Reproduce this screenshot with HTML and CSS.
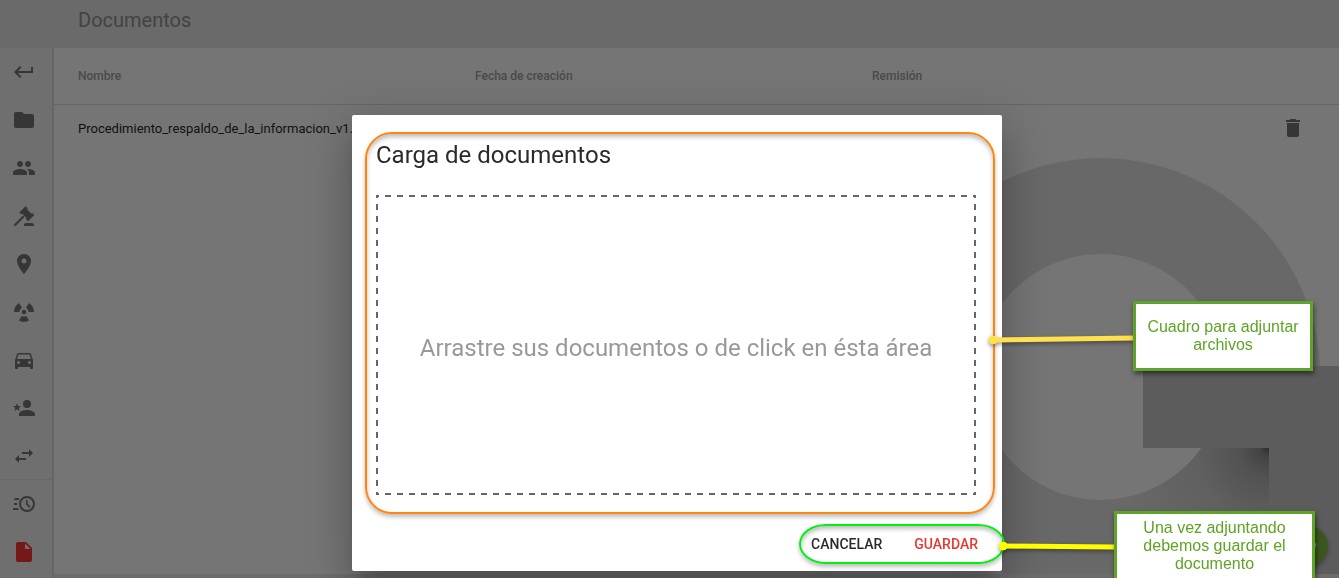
FILE: index.html
```html
<!DOCTYPE html>
<html lang="es">
<head>
<meta charset="utf-8">
<title>Documentos</title>
<link rel="stylesheet" href="styles.css">
</head>
<body>
<div class="app">
  <header class="topbar"><h1 class="topbar-title">Documentos</h1></header>
  <div class="body">
    <nav class="sidebar">
      <a class="nav-item" href="#" aria-label="Volver"><svg class="icon" viewBox="0 0 24 24"><path d="M19 7v4H5.830l3.580-3.590L8 6l-6 6 6 6 1.410-1.410L5.830 13H21V7z"/></svg></a>
      <a class="nav-item" href="#" aria-label="Carpetas"><svg class="icon" viewBox="0 0 24 24"><path d="M10 4H4c-1.100 0-2 .9-2 2v12c0 1.100.9 2 2 2h16c1.100 0 2-.9 2-2V8c0-1.100-.9-2-2-2h-8l-2-2z"/></svg></a>
      <a class="nav-item" href="#" aria-label="Personas"><svg class="icon" viewBox="0 0 24 24"><path d="M16 11c1.660 0 3-1.340 3-3s-1.340-3-3-3-3 1.340-3 3 1.340 3 3 3zm-8 0c1.660 0 3-1.340 3-3S9.660 5 8 5 5 6.340 5 8s1.340 3 3 3zm0 2c-2.330 0-7 1.170-7 3.500V19h14v-2.500C15 14.170 10.330 13 8 13zm8 0c-.29 0-.62.02-.97.05 1.160.84 1.970 1.970 1.970 3.450V19h6v-2.500c0-2.330-4.670-3.500-7-3.500z"/></svg></a>
      <a class="nav-item" href="#" aria-label="Audiencias"><svg class="icon" viewBox="0 0 24 24"><path d="M2.300 20.200l8.600-8.600 1.500 1.500-8.600 8.600a1.050 1.050 0 0 1-1.500-1.500zM7.300 8.500L13.600 2.200l2 2-.3 1.300 4 4 1.300-.3 1.700 1.700-6.300 6.300-1.900-1.900.3-1.200-4.300-4.300-1.200.3zM14 19h6a2 2 0 0 1 2 2v1H12v-1a2 2 0 0 1 2-2z"/></svg></a>
      <a class="nav-item" href="#" aria-label="Lugares"><svg class="icon" viewBox="0 0 24 24"><path d="M12 2C8.130 2 5 5.130 5 9c0 5.250 7 13 7 13s7-7.750 7-13c0-3.870-3.130-7-7-7zm0 9.500c-1.380 0-2.500-1.120-2.500-2.500s1.120-2.500 2.500-2.500 2.500 1.120 2.500 2.500-1.120 2.500-2.500 2.500z"/></svg></a>
      <a class="nav-item" href="#" aria-label="Riesgos"><svg class="icon" viewBox="0 0 24 24"><circle cx="12" cy="12" r="2.200"/><path d="M14.300 16l2.700 4.600c-3 1.800-7 1.800-10 0L9.700 16c1.500.8 3.100.8 4.600 0zM7.500 12H2c0-3.800 2.100-7.200 5-9l3 4.800C8.500 8.600 7.500 10 7.500 12zM16.500 12H22c0-3.800-2.100-7.200-5-9l-3 4.800c1.500.8 2.500 2.200 2.500 4.200z"/></svg></a>
      <a class="nav-item" href="#" aria-label="Vehículos"><svg class="icon" viewBox="0 0 24 24"><path d="M18.920 6.010C18.720 5.420 18.160 5 17.500 5h-11c-.66 0-1.210.42-1.420 1.010L3 12v8c0 .55.45 1 1 1h1c.55 0 1-.45 1-1v-1h12v1c0 .55.45 1 1 1h1c.55 0 1-.45 1-1v-8l-2.080-5.990zM6.500 16c-.83 0-1.500-.67-1.500-1.500S5.670 13 6.500 13s1.500.67 1.500 1.500S7.330 16 6.500 16zm11 0c-.83 0-1.500-.67-1.500-1.500s.67-1.500 1.500-1.500 1.500.67 1.500 1.500-.67 1.500-1.500 1.500zM5 11l1.500-4.500h11L19 11H5z"/></svg></a>
      <a class="nav-item" href="#" aria-label="Destacados"><svg class="icon" viewBox="0 0 24 24"><circle cx="15" cy="8" r="4"/><path d="M15 14c-2.670 0-8 1.330-8 4v2h16v-2c0-2.670-5.330-4-8-4zM5 13.300l2.500 1.700-.7-3L9 10.100l-2.900-.2L5 7.200 3.900 9.900l-2.900.2L3.200 12l-.7 3z"/></svg></a>
      <a class="nav-item" href="#" aria-label="Intercambios"><svg class="icon" viewBox="0 0 24 24"><path d="M7 11l-4 4 4 4v-3h7v-2H7v-3zm14-2l-4-4v3h-7v2h7v3l4-4z"/></svg></a>
      <a class="nav-item nav-item-divided" href="#" aria-label="Historial"><svg class="icon" viewBox="0 0 24 24"><path d="M15 4a8 8 0 1 0 0 16 8 8 0 0 0 0-16zm0 14a6 6 0 1 1 0-12 6 6 0 0 1 0 12zM14 8v4.600l3.300 3.200 1.200-1.300-2.900-2.700V8zM3 6h4v2H2zM2 11h3v2H2zM1 16h5l1 2H1z"/></svg></a>
      <a class="nav-item nav-item-active" href="#" aria-label="Documentos"><svg class="icon" viewBox="0 0 24 24"><path d="M6 2c-1.100 0-2 .9-2 2v16c0 1.100.9 2 2 2h12c1.100 0 2-.9 2-2V8l-6-6H6zm7 7V3.500L18.500 9H13z"/></svg></a>
    </nav>
    <main class="content">
      <svg class="watermark" width="350" height="426" viewBox="-20 0 350 426" aria-hidden="true">
        <defs>
          <radialGradient id="shade" gradientUnits="userSpaceOnUse" cx="260" cy="300" r="150">
            <stop offset="0" stop-color="#2c2c2c"/><stop offset=".06" stop-color="#434343"/><stop offset=".2" stop-color="#525252"/><stop offset=".5" stop-color="#606060"/><stop offset="1" stop-color="#686868"/>
          </radialGradient>
          <clipPath id="quarter"><rect x="92" y="300" width="168" height="126"/></clipPath>
        </defs>
        <path fill="#686868" fill-rule="evenodd" d="M92 10a219 219 0 1 0 .1 0zM92 106a123 123 0 1 1-.1 0z"/>
        <path clip-path="url(#quarter)" fill="url(#shade)" fill-rule="evenodd" d="M92 10a219 219 0 1 0 .1 0zM92 106a123 123 0 1 1-.1 0z"/>
        <path fill="#5c5c5c" d="M134 218h196v208h-70V300H134z"/>
      </svg>
      <table class="docs">
        <thead><tr><th>Nombre</th><th>Fecha de creación</th><th>Remisión</th><th class="actions"></th></tr></thead>
        <tbody><tr><td>Procedimiento_respaldo_de_la_informacion_v1.</td><td></td><td></td>
          <td class="actions"><button class="icon-button" aria-label="Eliminar"><svg class="icon" viewBox="0 0 24 24"><path d="M6 19c0 1.100.9 2 2 2h8c1.100 0 2-.9 2-2V7H6v12zM19 4h-3.500l-1-1h-5l-1 1H5v2h14V4z"/></svg></button></td></tr></tbody>
      </table>
      <button class="fab" aria-label="Adjuntar"><svg class="fab-icon" viewBox="0 0 24 24"><path d="M4 15h13a4 4 0 0 0 0-8H7" fill="none" stroke="#828c78" stroke-width="2"/></svg></button>
    </main>
  </div>
</div>

<div class="overlay">
  <section class="dialog" role="dialog" aria-labelledby="dialog-title">
    <h2 class="dialog-title" id="dialog-title">Carga de documentos</h2>
    <button class="dropzone">Arrastre sus documentos o de click en ésta área</button>
    <div class="dialog-actions">
      <button class="action">CANCELAR</button>
      <button class="action action-primary">GUARDAR</button>
    </div>
    <div class="mark mark-area"></div>
    <div class="mark mark-actions"></div>
    <svg class="leader" width="160" height="240" viewBox="0 0 160 240" aria-hidden="true">
      <g stroke="#ffe14d" fill="#ffe14d"><path stroke-width="5" d="M11 25L152 23"/><circle cx="11" cy="25" r="4"/></g>
      <g stroke="#ff0" fill="#ff0"><path stroke-width="5" d="M21 231L132 232"/><circle cx="21" cy="231" r="4"/></g>
    </svg>
    <p class="callout callout-area">Cuadro para adjuntar archivos</p>
    <p class="callout callout-save">Una vez adjuntando debemos guardar el documento</p>
  </section>
</div>
</body>
</html>
```

FILE: styles.css
```css
* { box-sizing: border-box; }

body {
  margin: 0;
  height: 100vh;
  overflow: hidden;
  background: #757575;
  color: #111;
  font-family: Roboto, "Liberation Sans", sans-serif;
}

button { border: 0; padding: 0; background: none; font: inherit; color: inherit; }

.app { display: flex; flex-direction: column; height: 100vh; overflow: hidden; }

.topbar {
  display: flex;
  flex: none;
  align-items: center;
  height: 48px;
  padding: 0 78px 8px;
  background: #6a6a6a;
}
.topbar-title { margin: 0; font-size: 20px; font-weight: 400; line-height: 24px; color: #434343; }

.body { display: flex; flex: 1; min-height: 0; }

.sidebar {
  display: flex;
  flex-direction: column;
  width: 54px;
  background: #6f6f6f;
  border-right: 2px solid #666;
}
.nav-item { display: flex; flex: none; align-items: center; height: 48px; padding-left: 12px; color: #363636; }
.nav-item-divided { box-shadow: 0 -1px #676767; }
.nav-item-active { color: #751818; }
.icon { display: block; width: 24px; height: 24px; fill: currentColor; }

.content { position: relative; flex: 1; min-width: 0; overflow: hidden; border-bottom: 4px solid #6c6c6c; }
.watermark { position: absolute; top: 100px; right: 0; }

.docs { position: relative; width: 100%; border-collapse: collapse; table-layout: fixed; }
.docs th, .docs td { padding: 0 0 0 24px; text-align: left; white-space: nowrap; }
.docs th { height: 56px; border-bottom: 1px solid #656565; font-size: 12px; font-weight: 500; color: #4a4a4a; }
.docs td { height: 48px; font-size: 13px; }
.docs .actions { width: 94px; padding-left: 36px; }
.icon-button { display: block; color: #363636; }

.fab {
  position: absolute;
  right: 11px;
  bottom: 8px;
  width: 40px;
  height: 40px;
  border-radius: 50%;
  background: #3b571d;
  box-shadow: 0 2px 5px rgba(0, 0, 0, .3);
}
.fab-icon { display: block; width: 20px; height: 20px; margin: auto; }

.overlay {
  position: fixed;
  inset: 0;
  display: flex;
  align-items: flex-start;
  justify-content: center;
  overflow: hidden;
  padding: 115px 0 0 15px;
}
.dialog {
  position: relative;
  width: 650px;
  padding: 24px 26px 9px 24px;
  border-radius: 2px;
  background: #fff;
  box-shadow: 0 11px 15px -7px rgba(0, 0, 0, .2), 0 24px 38px 3px rgba(0, 0, 0, .14), 0 9px 46px 8px rgba(0, 0, 0, .12);
}
.dialog-title { margin: 0 0 24px; font-size: 24px; font-weight: 400; line-height: 32px; color: #2a2a2a; }
.dropzone {
  display: block;
  width: 100%;
  height: 300px;
  padding-top: 6px;
  background:
    repeating-linear-gradient(90deg, #666 0 3px, transparent 3px 9px, #666 9px 12px) top / 100% 2px no-repeat,
    repeating-linear-gradient(90deg, #666 0 3px, transparent 3px 9px, #666 9px 12px) bottom / 100% 2px no-repeat,
    repeating-linear-gradient(#666 0 3px, transparent 3px 9px, #666 9px 12px) left / 2px 100% no-repeat,
    repeating-linear-gradient(#666 0 3px, transparent 3px 9px, #666 9px 12px) right / 2px 100% no-repeat;
  font-size: 24px;
  line-height: 32px;
  color: #999;
}
.dialog-actions { display: flex; justify-content: flex-end; gap: 16px; padding-top: 31px; }
.action { height: 36px; padding: 0 8px; font-size: 14px; font-weight: 500; color: #2a2a2a; }
.action-primary { margin-right: -10px; color: #e53935; }

.mark { position: absolute; pointer-events: none; }
.mark-area {
  inset: 17px 7px 57px 13px;
  border: 2px solid #ff850d;
  border-radius: 27px;
  box-shadow: 0 3px 4px rgba(0, 0, 0, .25), inset 0 3px 4px rgba(0, 0, 0, .25);
}
.mark-actions {
  right: -3px;
  bottom: 7px;
  width: 206px;
  height: 40px;
  border: 2px solid #00f010;
  border-radius: 27px / 20px;
  box-shadow: 0 3px 4px rgba(0, 0, 0, .25), inset 0 3px 4px rgba(0, 0, 0, .25);
}
.leader { position: absolute; left: 630px; top: 200px; filter: drop-shadow(0 2px 2px rgba(0, 0, 0, .4)); }

.callout {
  position: absolute;
  display: flex;
  align-items: center;
  justify-content: center;
  margin: 0;
  border: 3px solid #5fa327;
  background: #fff;
  box-shadow: 1px 3px 5px rgba(0, 0, 0, .5);
  font-family: "Liberation Sans", Arial, sans-serif;
  font-size: 16px;
  line-height: 18px;
  text-align: center;
  color: #5fa327;
}
.callout-area { left: 781px; top: 186px; width: 180px; height: 70px; padding: 0 8px; }
.callout-save { left: 762px; top: 396px; width: 201px; height: 70px; padding: 0 24px; }
```
